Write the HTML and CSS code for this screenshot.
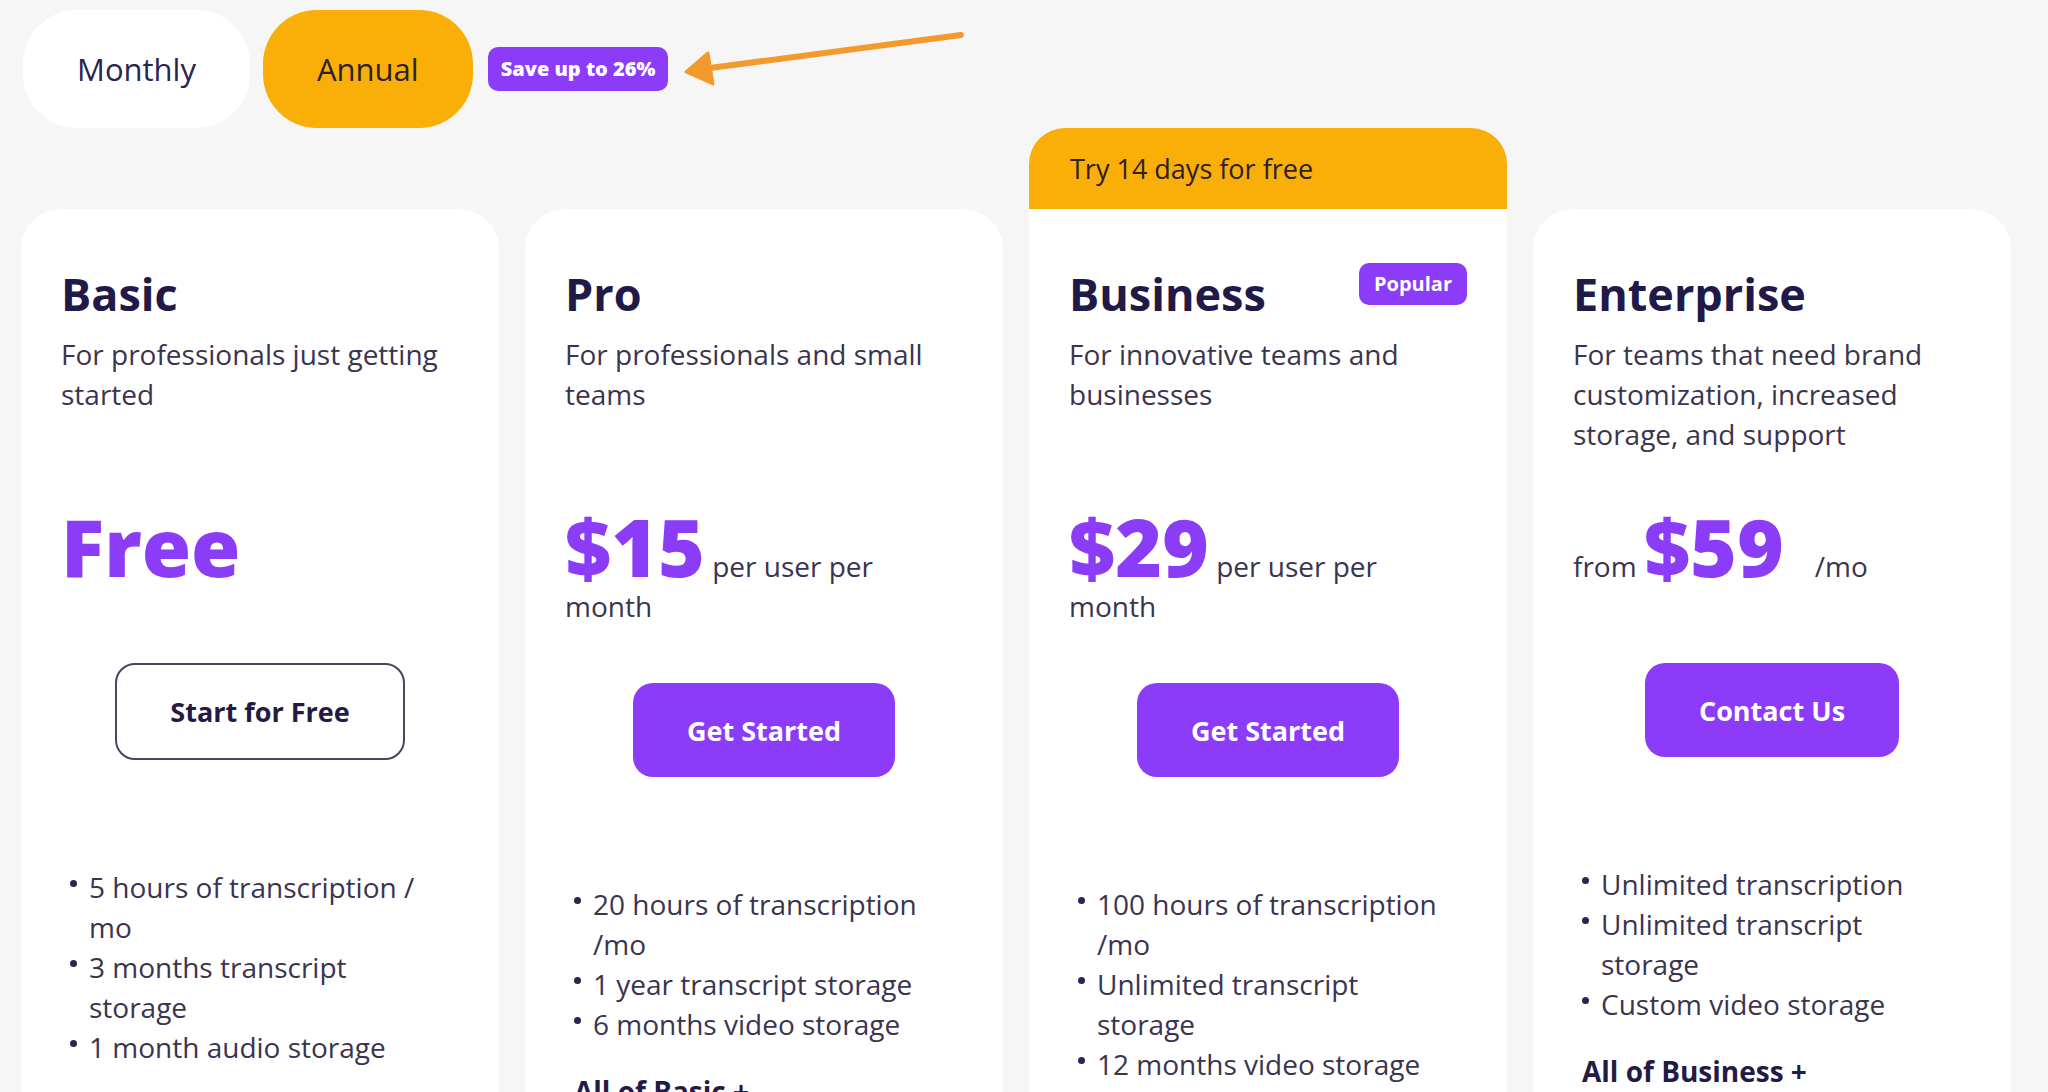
FILE: index.html
```html
<!DOCTYPE html>
<html lang="en">
<head>
    <meta charset="UTF-8">
    <meta name="viewport" content="width=device-width, initial-scale=1.0">
    <title>Pricing</title>
    <link rel="stylesheet" href="styles.css">
</head>
<body>
    <div class="page">
        <!-- billing period switch -->
        <div class="billing">
            <button class="period">Monthly</button>
            <button class="period period-active">Annual</button>
            <span class="save-badge">Save up to 26%</span>
            <svg class="arrow" width="290" height="82" viewBox="0 0 290 82">
                <path d="M281 7 L30 40" stroke="#f39a2c" stroke-width="6" stroke-linecap="round" fill="none"/>
                <path d="M6 44 L28 25 L33 56 Z" fill="#f39a2c" stroke="#f39a2c" stroke-width="3" stroke-linejoin="round"/>
            </svg>
        </div>

        <div class="plans">
            <div class="trial">Try 14 days for free</div>

            <div class="plan">
                <div class="plan-head">
                    <h2 class="plan-name">Basic</h2>
                </div>
                <p class="plan-desc">For professionals just getting started</p>
                <div class="price"><span class="amount">Free</span></div>
                <div class="actions">
                    <button class="btn btn-outline">Start for Free</button>
                </div>
                <ul class="features">
                    <li>5 hours of transcription / mo</li>
                    <li>3 months transcript storage</li>
                    <li>1 month audio storage</li>
                </ul>
            </div>

            <div class="plan">
                <div class="plan-head">
                    <h2 class="plan-name">Pro</h2>
                </div>
                <p class="plan-desc">For professionals and small teams</p>
                <div class="price">
                    <span class="amount">$15</span> <span>per user per</span> <span>month</span>
                </div>
                <div class="actions">
                    <button class="btn">Get Started</button>
                </div>
                <ul class="features">
                    <li>20 hours of transcription /mo</li>
                    <li>1 year transcript storage</li>
                    <li>6 months video storage</li>
                </ul>
                <h4 class="extras">All of Basic +</h4>
            </div>

            <div class="plan plan-featured">
                <div class="plan-head">
                    <h2 class="plan-name">Business</h2>
                    <span class="popular">Popular</span>
                </div>
                <p class="plan-desc">For innovative teams and businesses</p>
                <div class="price">
                    <span class="amount">$29</span> <span>per user per</span> <span>month</span>
                </div>
                <div class="actions">
                    <button class="btn">Get Started</button>
                </div>
                <ul class="features">
                    <li>100 hours of transcription /mo</li>
                    <li>Unlimited transcript storage</li>
                    <li>12 months video storage</li>
                </ul>
            </div>

            <div class="plan">
                <div class="plan-head">
                    <h2 class="plan-name">Enterprise</h2>
                </div>
                <p class="plan-desc">For teams that need brand customization, increased storage, and support</p>
                <div class="price">
                    <span>from</span> <span class="amount">$59</span><span class="unit">/mo</span>
                </div>
                <div class="actions">
                    <button class="btn">Contact Us</button>
                </div>
                <ul class="features">
                    <li>Unlimited transcription</li>
                    <li>Unlimited transcript storage</li>
                    <li>Custom video storage</li>
                </ul>
                <h4 class="extras">All of Business +</h4>
            </div>
        </div>
    </div>
</body>
</html>
```

FILE: styles.css
```css
body {
    margin: 0;
    font-family: "Open Sans", "Noto Sans", sans-serif;
    background-color: #f6f6f6;
    color: #3a344f;
    height: 100vh;
    overflow: hidden;
}

.page {
    padding: 10px 21px 0;
}

/* billing switch */
.billing {
    display: flex;
    align-items: center;
    height: 118px;
    padding-left: 2px;
}

.period {
    height: 118px;
    padding: 0 54px;
    border: none;
    border-radius: 54px;
    background-color: #fff;
    color: #2a2450;
    font-family: inherit;
    font-size: 31px;
    cursor: pointer;
}

.period-active {
    margin-left: 13px;
    background-color: #f9ae08;
    color: #2b2130;
}

.save-badge {
    margin-left: 15px;
    height: 44px;
    line-height: 44px;
    padding: 0 13px;
    border-radius: 10px;
    background-color: #8c3cf8;
    color: #fff;
    font-size: 20px;
    font-weight: 800;
}

.arrow {
    margin-left: 12px;
}

/* plan cards */
.plans {
    display: grid;
    grid-template-columns: repeat(4, 478px);
    grid-template-rows: 81px minmax(940px, auto);
    column-gap: 26px;
}

.trial {
    grid-column: 3;
    grid-row: 1;
    background-color: #f9ae08;
    border-radius: 36px 36px 0 0;
    padding: 0 41px;
    display: flex;
    align-items: center;
    font-size: 27px;
    color: #2b2130;
}

.plan {
    grid-row: 2;
    background-color: #fff;
    border-radius: 40px;
    padding: 59px 40px 40px;
}

.plan-featured {
    border-radius: 0;
}

.plan-head {
    display: flex;
    justify-content: space-between;
    align-items: flex-start;
}

.plan-name {
    margin: 0;
    font-size: 45px;
    line-height: 52px;
    font-weight: 700;
    color: #211947;
}

.popular {
    margin-top: -5px;
    height: 42px;
    line-height: 42px;
    padding: 0 15px;
    border-radius: 10px;
    background-color: #8c3cf8;
    color: #fff;
    font-size: 20px;
    font-weight: 700;
}

.plan-desc {
    margin: 14px 0 0;
    min-height: 120px;
    font-size: 28px;
    line-height: 40px;
}

.price {
    margin-top: 52px;
    min-height: 100px;
    max-width: 360px;
    font-size: 28px;
    line-height: 40px;
}

.amount {
    font-size: 80px;
    line-height: 80px;
    font-weight: 800;
    color: #8a3cf7;
}

.unit {
    margin-left: 31px;
}

.actions {
    margin-top: 57px;
    display: flex;
    justify-content: center;
}

.btn {
    height: 94px;
    padding: 0 54px;
    border: none;
    border-radius: 20px;
    background-color: #8c3cf8;
    color: #fff;
    font-family: inherit;
    font-size: 27px;
    font-weight: 700;
    cursor: pointer;
}

.btn-outline {
    height: 97px;
    padding: 0 53px;
    background-color: #fff;
    border: 2px solid #4a4560;
    color: #231a46;
}

.features {
    list-style: none;
    margin: 107px 0 0;
    padding: 0;
}

.features li {
    display: flex;
    max-width: 373px;
    font-size: 28px;
    line-height: 40px;
}

.features li::before {
    content: "";
    flex: none;
    width: 7px;
    height: 7px;
    margin: 13px 12px 0 9px;
    border-radius: 50%;
    background-color: #2a2450;
}

.extras {
    margin: 27px 0 0 9px;
    font-size: 28px;
    line-height: 40px;
    font-weight: 700;
    color: #231a46;
}
```
